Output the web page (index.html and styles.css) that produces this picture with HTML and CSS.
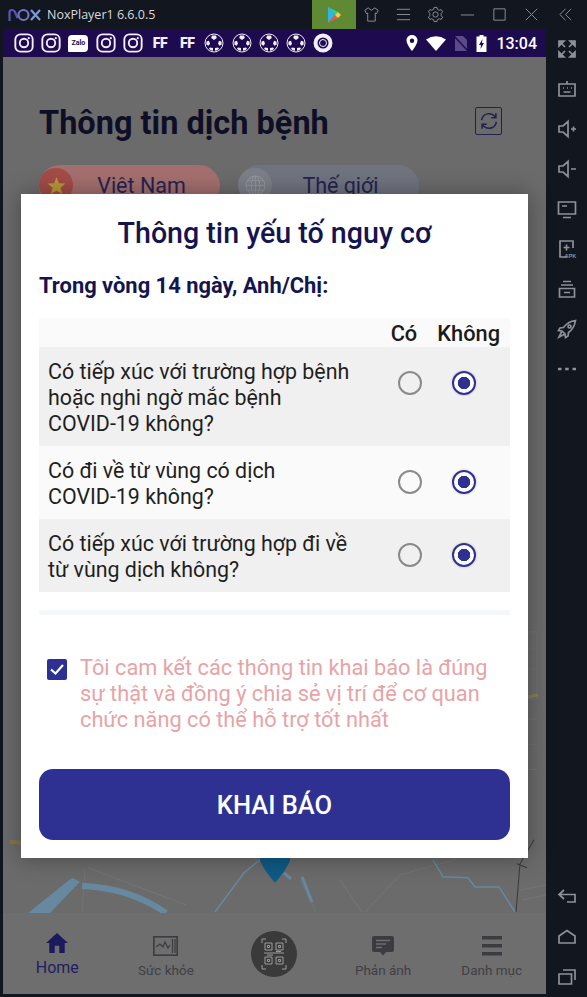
FILE: index.html
```html
<!DOCTYPE html>
<html lang="vi">
<head>
    <meta charset="UTF-8">
    <meta name="viewport" content="width=device-width, initial-scale=1.0">
    <title>NoxPlayer1 - Thông tin dịch bệnh</title>
    <link rel="stylesheet" href="styles.css">
</head>
<body>
    <svg class="sprites" width="0" height="0">
        <symbol id="i-insta" viewBox="0 0 18 18">
            <rect x="1.2" y="1.2" width="15.6" height="15.6" rx="4.5" fill="none" stroke="currentColor" stroke-width="1.7"/>
            <circle cx="9" cy="9" r="3.8" fill="none" stroke="currentColor" stroke-width="1.7"/>
            <circle cx="13.3" cy="4.7" r="1" fill="currentColor"/>
        </symbol>
        <symbol id="i-ball" viewBox="0 0 20 20">
            <circle cx="10" cy="10" r="9" fill="none" stroke="currentColor" stroke-width="1"/>
            <path d="M8 2.500H12L12.800 5 10 7 7.200 5Z M2.500 8.500 5 7.800 6 10.800 4.500 12.800 2.300 11.500Z M17.500 8.500 15 7.800 14 10.800 15.500 12.800 17.700 11.500Z M6 14.500 9 15 9 17.800 6.500 17.200 5 15.500Z M14 14.500 11 15 11 17.800 13.500 17.200 15 15.500Z" fill="currentColor"/>
        </symbol>
    </svg>

    <div class="emulator">
        <header class="titlebar">
            <svg class="nox-logo" viewBox="0 0 33 14" width="33" height="14" fill="none" stroke-width="2.2">
                <path d="M1.500 13V4.500Q1.500 2 4 2Q6 2 7 4L9.500 10" stroke="#5a57b8"/>
                <circle cx="15.500" cy="7" r="5" stroke="#6f74c9"/>
                <path d="M23 2 32 12M32 2 23 12" stroke="#7f97d8"/>
            </svg>
            <span class="app-name">NoxPlayer1 6.6.0.5</span>
            <div class="play-tab">
                <svg viewBox="0 0 14 16" width="14" height="16">
                    <path d="M1 0V16L8 8Z" fill="#2bb7e8"/>
                    <path d="M1 0 8 8 11 5Z" fill="#35c9a0"/>
                    <path d="M1 16 8 8 11 11Z" fill="#e8574a"/>
                    <path d="M8 8 11 5 14 8 11 11Z" fill="#f3d23a"/>
                </svg>
            </div>
            <div class="window-btns">
                <svg class="win-btn" viewBox="0 0 18 18"><path d="M5.500 2 2 4.500 3.500 8 5 7.500V16H13V7.500L14.500 8 16 4.500 12.500 2 9 4.500Z"/></svg>
                <svg class="win-btn" viewBox="0 0 18 18"><path d="M2 3.500H16M2 9H16M2 14.500H16"/></svg>
                <svg class="win-btn" viewBox="0 0 18 18"><circle cx="9" cy="9" r="2.800"/><path d="M7.500 1.500H10.500L11 3.500 13 4.500 15 3.800 16.500 6.200 15 7.800V10.200L16.500 11.800 15 14.200 13 13.500 11 14.500 10.500 16.500H7.500L7 14.500 5 13.500 3 14.200 1.500 11.800 3 10.200V7.800L1.500 6.200 3 3.800 5 4.500 7 3.500Z"/></svg>
                <svg class="win-btn" viewBox="0 0 18 18"><path d="M2 9.500H16"/></svg>
                <svg class="win-btn" viewBox="0 0 18 18"><path d="M3 3H15V15H3Z"/></svg>
                <svg class="win-btn" viewBox="0 0 18 18"><path d="M3 3 15 15M15 3 3 15"/></svg>
            </div>
            <svg class="win-btn collapse" viewBox="0 0 18 18"><path d="M9 3 3 9 9 15M15 3 9 9 15 15"/></svg>
        </header>

        <div class="emu-body">
            <div class="phone">
                <div class="statusbar">
                    <div class="notif-icons">
                        <svg class="notif"><use href="#i-insta"/></svg>
                        <svg class="notif"><use href="#i-insta"/></svg>
                        <span class="notif zalo">Zalo</span>
                        <svg class="notif"><use href="#i-insta"/></svg>
                        <svg class="notif"><use href="#i-insta"/></svg>
                        <span class="notif ff">FF</span>
                        <span class="notif ff">FF</span>
                        <svg class="notif"><use href="#i-ball"/></svg>
                        <svg class="notif"><use href="#i-ball"/></svg>
                        <svg class="notif"><use href="#i-ball"/></svg>
                        <svg class="notif"><use href="#i-ball"/></svg>
                        <svg class="notif" viewBox="0 0 20 20" fill="none" stroke="currentColor"><circle cx="10" cy="10" r="7.500" stroke-width="4"/><circle cx="10" cy="10" r="3.500" stroke-width="1"/></svg>
                    </div>
                    <div class="sys-icons">
                        <svg viewBox="0 0 12 16" width="12" height="16"><path fill-rule="evenodd" d="M6 0C2.700 0 .5 2.400.5 5.500.5 9.500 6 16 6 16S11.500 9.500 11.500 5.500C11.500 2.400 9.300 0 6 0ZM6 3.500A2.200 2.200 0 1 1 6 7.900 2.200 2.200 0 0 1 6 3.500Z" fill="#fff"/></svg>
                        <svg viewBox="0 0 20 15" width="20" height="15"><path d="M0 3.500Q10-3 20 3.500L10 15Z" fill="#fff"/></svg>
                        <svg viewBox="0 0 14 17" width="14" height="17"><path d="M1 1H9L13 5V16H1Z" fill="#5b4a8a"/><path d="M0 1 14 16" stroke="#1d0a4f" stroke-width="1.500"/></svg>
                        <svg viewBox="0 0 11 17" width="11" height="17"><path fill-rule="evenodd" d="M3.500 0H7.500V1.500H10.500V17H.5V1.500H3.500ZM6.500 4 3 10H5L4.500 14 8 8H6Z" fill="#fff"/></svg>
                    </div>
                    <span class="clock">13:04</span>
                </div>

                <div class="screen">
                    <div class="page-head">
                        <h1 class="page-title">Thông tin dịch bệnh</h1>
                        <button class="refresh-btn" aria-label="Tải lại">
                            <svg viewBox="0 0 24 24" width="22" height="22" fill="none" stroke="#22224e" stroke-width="1.700">
                                <path d="M4 11C4.500 6.500 8 4 12 4 15 4 17.500 5.500 19 8M20 13C19.500 17.500 16 20 12 20 9 20 6.500 18.500 5 16"/>
                                <path d="M19.500 3.500V8.500H14.500M4.500 20.500V15.500H9.500"/>
                            </svg>
                        </button>
                    </div>
                    <div class="region-tabs">
                        <div class="region-tab tab-vn">
                            <span class="tab-badge">
                                <svg viewBox="0 0 20 20" width="19" height="19"><path d="M10 1 12.600 7.500 19.500 8 14.200 12.400 16 19 10 15.400 4 19 5.800 12.400.5 8 7.400 7.500Z" fill="#b79a36"/></svg>
                            </span>
                            <span class="tab-label">Việt Nam</span>
                        </div>
                        <div class="region-tab tab-world">
                            <span class="tab-badge">
                                <svg viewBox="0 0 20 20" width="21" height="21" fill="none" stroke="#92949c" stroke-width="1"><circle cx="10" cy="10" r="9"/><ellipse cx="10" cy="10" rx="4" ry="9"/><path d="M1 10H19M2.500 5.500H17.500M2.500 14.500H17.500M10 1V19"/></svg>
                            </span>
                            <span class="tab-label">Thế giới</span>
                        </div>
                    </div>

                    <div class="map-area">
                        <svg class="map" viewBox="3 210 543 703" preserveAspectRatio="none" fill="none">
                            <path d="M534 840 520 864 516 912M517 864 527 868" stroke="#3a3a3a" stroke-width="1"/>
                            <path d="M85 870 82 912M88 868 186 905M455 860 400 875 365 912M300 880 316 912M340 880 362 912M520 890 546 885M522 900 546 895" stroke="#747474" stroke-width="1"/>
                            <path d="M529 633H537V700H529ZM533 633V700M529 650H537M529 670H537M529 720 537 720M529 745H537M529 770H537" stroke="#737373" stroke-width="1"/>
                            <path d="M528 698 538 696" stroke="#85804f" stroke-width="3"/>
                            <path d="M10 842 21 843" stroke="#85774a" stroke-width="4"/>
                            <path d="M28 913 72 878 80 882 50 913Z" fill="#66899f"/>
                            <path d="M82 886Q130 888 166 913" stroke="#66899f" stroke-width="6"/>
                            <path d="M215 912 244 873 260 860M433 860 443 877 468 878 475 887 499 887 515 912" stroke="#66899f" stroke-width="1.500"/>
                            <path d="M302 877 312 902M284 873 291 879" stroke="#66899f" stroke-width="3"/>
                            <path d="M260 855H290V861Q285 872 275 883 265 872 260 861Z" fill="#0e5b85"/>
                        </svg>
                    </div>

                    <nav class="tabbar">
                        <div class="nav-item active">
                            <svg viewBox="0 0 24 22" width="22" height="20"><path d="M12 0 24 11H20.500V22H14.500V14H9.500V22H3.500V11H0Z" fill="#1a1a5c"/></svg>
                            <span class="nav-label">Home</span>
                        </div>
                        <div class="nav-item">
                            <svg viewBox="0 0 25 20" width="25" height="20"><rect x=".8" y=".8" width="23.400" height="18.400" fill="none" stroke="#3b3b40" stroke-width="1.600"/><path d="M3 11 7 8 10 11 12 6 15 12 17 9M19.500 3V17M22 3V17" fill="none" stroke="#3b3b40" stroke-width="1.200"/></svg>
                            <span class="nav-label">Sức khỏe</span>
                        </div>
                        <div class="nav-item">
                            <div class="qr-btn">
                                <svg viewBox="0 0 26 32" width="26" height="32" fill="none" stroke="#9b9b9b" stroke-width="1">
                                    <path d="M1 5V1H5M21 1H25V5M1 27V31H5M21 31H25V27"/>
                                    <path d="M4 5H11V12H4ZM15 5H22V12H15ZM4 19H11V26H4ZM15 19H22V26H15ZM6.500 7.500H8.500V9.500H6.500ZM17.500 7.500H19.500V9.500H17.500ZM6.500 21.500H8.500V23.500H6.500ZM17.500 21.500H19.500V23.500H17.500ZM3 15H23M6 17H12M15 13.500H20"/>
                                </svg>
                            </div>
                        </div>
                        <div class="nav-item">
                            <svg viewBox="0 0 22 20" width="22" height="20"><path d="M2 0H20Q22 0 22 2V14Q22 16 20 16H14L11 19.500 8 16H2Q0 16 0 14V2Q0 0 2 0Z" fill="#3b3b40"/><path d="M4 4.500H18M4 8H14M4 11.500H10" stroke="#6e6e6e" stroke-width="1.400"/></svg>
                            <span class="nav-label">Phản ánh</span>
                        </div>
                        <div class="nav-item">
                            <svg viewBox="0 0 20 20" width="20" height="20"><path d="M0 0H20V3.500H0ZM0 8H20V11.500H0ZM0 16H20V19.500H0Z" fill="#3b3b40"/></svg>
                            <span class="nav-label">Danh mục</span>
                        </div>
                    </nav>

                    <!-- hop thoai khai bao nam de len man hinh -->
                    <div class="overlay">
                        <div class="dialog">
                            <h2 class="dialog-title">Thông tin yếu tố nguy cơ</h2>
                            <p class="dialog-sub">Trong vòng 14 ngày, Anh/Chị:</p>
                            <div class="risk-table">
                                <div class="risk-head">
                                    <span>Có</span>
                                    <span>Không</span>
                                </div>
                                <div class="risk-row">
                                    <div class="risk-text">Có tiếp xúc với trường hợp bệnh hoặc nghi ngờ mắc bệnh <span class="nowrap">COVID-19</span> không?</div>
                                    <span class="radio"></span>
                                    <span class="radio checked"></span>
                                </div>
                                <div class="risk-row alt">
                                    <div class="risk-text">Có đi về từ vùng có dịch <span class="nowrap">COVID-19</span> không?</div>
                                    <span class="radio"></span>
                                    <span class="radio checked"></span>
                                </div>
                                <div class="risk-row">
                                    <div class="risk-text">Có tiếp xúc với trường hợp đi về từ vùng dịch không?</div>
                                    <span class="radio"></span>
                                    <span class="radio checked"></span>
                                </div>
                                <div class="risk-end"></div>
                            </div>
                            <div class="consent">
                                <span class="checkbox">
                                    <svg viewBox="0 0 20 20" width="20" height="20" fill="none" stroke="#fff" stroke-width="2.200"><path d="M4 10.500 8.500 14.500 16 6"/></svg>
                                </span>
                                <p class="consent-text">Tôi cam kết các thông tin khai báo là đúng sự thật và đồng ý chia sẻ vị trí để cơ quan chức năng có thể hỗ trợ tốt nhất</p>
                            </div>
                            <button class="submit-btn">KHAI BÁO</button>
                        </div>
                    </div>
                </div>
            </div>

            <aside class="rail">
                <div class="rail-group">
                    <svg class="rail-icon" viewBox="0 0 20 20"><path d="M2 2H7L2 7ZM18 2H13L18 7ZM2 18H7L2 13ZM18 18H13L18 13Z" fill="#8d9199"/><path d="M4 4 8 8M16 4 12 8M4 16 8 12M16 16 12 12"/></svg>
                    <svg class="rail-icon" viewBox="0 0 20 20"><path d="M2 5H18V17H2ZM10 5V2M6 9H7M10 9H11M14 9H15M6.500 13H13.500"/></svg>
                    <svg class="rail-icon" viewBox="0 0 20 20"><path d="M2 7H6L11 2.500V17.500L6 13H2ZM14 10H19M16.500 7.500V12.500"/></svg>
                    <svg class="rail-icon" viewBox="0 0 20 20"><path d="M2 7H6L11 2.500V17.500L6 13H2ZM14 10H19"/></svg>
                    <svg class="rail-icon" viewBox="0 0 20 20"><path d="M1.500 3H18.500V15H1.500ZM6 18.500H14M5 7H10"/></svg>
                    <svg class="rail-icon" viewBox="0 0 20 20"><path d="M10 18H3V2H16V9M9.500 5.500V11.500M6.500 8.500H12.500"/><text class="apk-tag" x="7.500" y="18.500">APK</text></svg>
                    <svg class="rail-icon" viewBox="0 0 20 20"><path d="M6 2.500H14M4 6H16M2.500 9.500H17.500V18H2.500ZM7 13.500H13"/></svg>
                    <svg class="rail-icon" viewBox="0 0 20 20"><path d="M18.500 1.500Q11 2.500 6.500 8.500L3 9 1.500 11.500 5 12 8 15 8.500 18.500 11 17 11.500 13.500Q17.500 9 18.500 1.500ZM5 12 2 18 8 15"/><circle cx="12.500" cy="7.500" r="1.500"/></svg>
                    <svg class="rail-icon" viewBox="0 0 20 20"><path d="M1 10H4.500M8.200 10H11.700M15.500 10H19" stroke-width="2.500"/></svg>
                </div>
                <div class="rail-group">
                    <svg class="rail-icon" viewBox="0 0 20 20"><path d="M7 3 2 7.500 7 12M2 7.500H18V15H10"/></svg>
                    <svg class="rail-icon" viewBox="0 0 20 20"><path d="M2 9 10 3.500 18 9V16H2Z"/></svg>
                    <svg class="rail-icon" viewBox="0 0 20 20"><path d="M2 7H14.500V17H2ZM6 3H18V13"/></svg>
                </div>
            </aside>
        </div>
    </div>
</body>
</html>
```

FILE: styles.css
```css
* {
    box-sizing: border-box;
}
html, body {
    margin: 0;
    padding: 0;
    height: 100%;
    overflow: hidden;
    background-color: #12161f;
}
body {
    font-family: Roboto, "Noto Sans", sans-serif;
}
h1, h2, p {
    margin: 0;
}
button {
    font-family: inherit;
    border: none;
    padding: 0;
}
.sprites {
    position: absolute;
}
.nowrap {
    white-space: nowrap;
}

.emulator {
    height: 997px;
    display: flex;
    flex-direction: column;
}

/* title bar */
.titlebar {
    height: 29px;
    display: flex;
    align-items: center;
    padding-left: 8px;
    color: #d8dade;
}
.nox-logo {
    flex: none;
}
.app-name {
    width: 265px;
    margin-left: 6px;
    font-family: "Open Sans", sans-serif;
    font-size: 12.500px;
}
.play-tab {
    width: 44px;
    height: 29px;
    background-color: #5f8a33;
    display: flex;
    align-items: center;
    justify-content: center;
}
.window-btns {
    display: flex;
    gap: 15px;
    margin-left: 7px;
}
.win-btn {
    width: 17px;
    height: 17px;
    fill: none;
    stroke: #8d9199;
    stroke-width: 1;
}
.collapse {
    margin-left: 17px;
}

/* android part */
.emu-body {
    flex: 1;
    display: flex;
    min-height: 0;
    padding-left: 3px;
}
.phone {
    width: 543px;
    height: 965px;
    display: flex;
    flex-direction: column;
}
.statusbar {
    height: 28px;
    flex: none;
    display: flex;
    align-items: center;
    padding: 0 9px 0 11px;
    background-color: #1d0a4f;
    color: #fff;
}
.notif-icons {
    display: flex;
    align-items: center;
    gap: 7.200px;
    width: 322px;
}
.notif {
    flex: none;
    width: 20px;
    height: 20px;
    color: #f2eefc;
}
.zalo {
    height: 17px;
    border-radius: 4px 4px 4px 1px;
    background-color: #fff;
    color: #1d0a4f;
    font-size: 7px;
    font-weight: 700;
    line-height: 17px;
    text-align: center;
}
.ff {
    font-size: 14px;
    font-weight: 900;
    line-height: 20px;
    text-align: center;
    letter-spacing: -.5px;
}
.sys-icons {
    display: flex;
    align-items: center;
    gap: 8px;
    margin-left: 70px;
}
.clock {
    margin-left: auto;
    font-size: 16px;
    font-weight: 500;
}

.screen {
    flex: 1;
    position: relative;
    display: flex;
    flex-direction: column;
    min-height: 0;
    background-color: #6b6b6b;
}
.page-head {
    height: 108px;
    flex: none;
    display: flex;
    align-items: flex-end;
    justify-content: space-between;
    padding: 0 44px 24px 36px;
}
.page-title {
    font-size: 32.500px;
    font-weight: 700;
    line-height: 36px;
    color: #0e0f26;
}
.refresh-btn {
    width: 27px;
    height: 28px;
    margin-bottom: 6px;
    border: 1.500px solid #22224e;
    border-radius: 2px;
    background: transparent;
    display: flex;
    align-items: center;
    justify-content: center;
}
.region-tabs {
    flex: none;
    display: flex;
    gap: 18px;
    padding-left: 36px;
}
.region-tab {
    width: 181px;
    height: 42px;
    border-radius: 21px;
    display: flex;
    align-items: flex-start;
}
.tab-vn {
    background-color: #a46f6f;
}
.tab-world {
    background-color: #70747f;
}
.tab-badge {
    width: 34px;
    height: 34px;
    margin-top: 3px;
    border-radius: 50%;
    flex: none;
    display: flex;
    align-items: center;
    justify-content: center;
}
.tab-vn .tab-badge {
    background-color: #a34c48;
}
.tab-world .tab-badge {
    background-color: #7c7f88;
}
.tab-label {
    flex: 1;
    padding-right: 10px;
    font-size: 21.500px;
    line-height: 42px;
    text-align: center;
    color: #252352;
}
.map-area {
    flex: 1;
    min-height: 0;
}
.map {
    display: block;
    width: 100%;
    height: 100%;
}

/* bottom tabs */
.tabbar {
    height: 81px;
    flex: none;
    display: grid;
    grid-template-columns: repeat(5, 1fr);
    background-color: #6e6e6e;
}
.nav-item {
    display: flex;
    flex-direction: column;
    align-items: center;
    padding-top: 23px;
    color: #3f3f45;
}
.nav-label {
    margin-top: 5px;
    font-size: 13.500px;
    line-height: 18px;
}
.nav-item.active {
    padding-top: 20px;
    color: #1f1e5e;
}
.nav-item.active .nav-label {
    margin-top: 6px;
    font-size: 16px;
}
.qr-btn {
    width: 46px;
    height: 46px;
    margin-top: -5px;
    border-radius: 50%;
    background-color: #3a3a3a;
    display: flex;
    align-items: center;
    justify-content: center;
}

/* dialog */
.overlay {
    position: absolute;
    top: 0;
    right: 0;
    bottom: 0;
    left: 0;
    display: flex;
    align-items: center;
    padding: 0 18px;
}
.dialog {
    width: 100%;
    padding: 22px 18px 18px;
    background-color: #fff;
    box-shadow: 0 0 22px rgba(0, 0, 0, 0.35);
}
.dialog-title {
    font-size: 28.600px;
    font-weight: 500;
    line-height: 34px;
    text-align: center;
    color: #14154f;
}
.dialog-sub {
    margin-top: 22px;
    font-size: 21.900px;
    font-weight: 700;
    line-height: 28px;
    color: #14154f;
}
.risk-table {
    margin-top: 18px;
}
.risk-head {
    height: 29px;
    display: flex;
    justify-content: flex-end;
    align-items: center;
    gap: 20px;
    padding: 2px 10px 0 0;
    background-color: #fafafa;
    font-size: 21.800px;
    font-weight: 500;
    color: #1a1a1a;
}
.risk-row {
    display: flex;
    align-items: flex-start;
    padding: 12px 19px 9px 9px;
    background-color: #f0f0f0;
    font-size: 21.400px;
    line-height: 26px;
    color: #1f1f1f;
}
.risk-row.alt {
    background-color: #fafafa;
}
.risk-text {
    flex: 1;
    padding-right: 12px;
}
.radio {
    flex: none;
    width: 24px;
    height: 24px;
    margin: 12px 15px 0;
    border: 2px solid #8a8a8a;
    border-radius: 50%;
}
.radio.checked {
    border: 2.500px solid #2f3192;
    box-shadow: 0 0 2px rgba(47, 49, 146, 0.4);
    background: radial-gradient(circle, #2f3192 0 6px, #fff 6.500px);
}
.risk-end {
    height: 5px;
    margin-top: 18px;
    background-color: #f4f8fb;
}
.consent {
    margin-top: 40px;
    display: flex;
    align-items: flex-start;
    padding-left: 8px;
}
.checkbox {
    flex: none;
    width: 20px;
    height: 21px;
    margin-top: 4px;
    border-radius: 2px;
    background-color: #2f3192;
}
.consent-text {
    margin-left: 13px;
    font-size: 21.750px;
    line-height: 26px;
    color: #e8a3a6;
}
.submit-btn {
    display: block;
    width: 100%;
    height: 71px;
    margin-top: 36px;
    padding-top: 2px;
    border-radius: 14px;
    background-color: #2f3192;
    color: #fff;
    font-size: 25.500px;
    font-weight: 500;
}

/* right rail */
.rail {
    flex: 1;
    display: flex;
    flex-direction: column;
    justify-content: space-between;
}
.rail-group {
    display: flex;
    flex-direction: column;
    align-items: center;
}
.rail-icon {
    width: 20px;
    height: 20px;
    margin: 10px 0;
    fill: none;
    stroke: #8d9199;
    stroke-width: 1.700;
}
.apk-tag {
    font-family: "Liberation Sans", sans-serif;
    font-size: 5.500px;
    font-weight: 700;
    fill: #8d9199;
    stroke: none;
}
```
